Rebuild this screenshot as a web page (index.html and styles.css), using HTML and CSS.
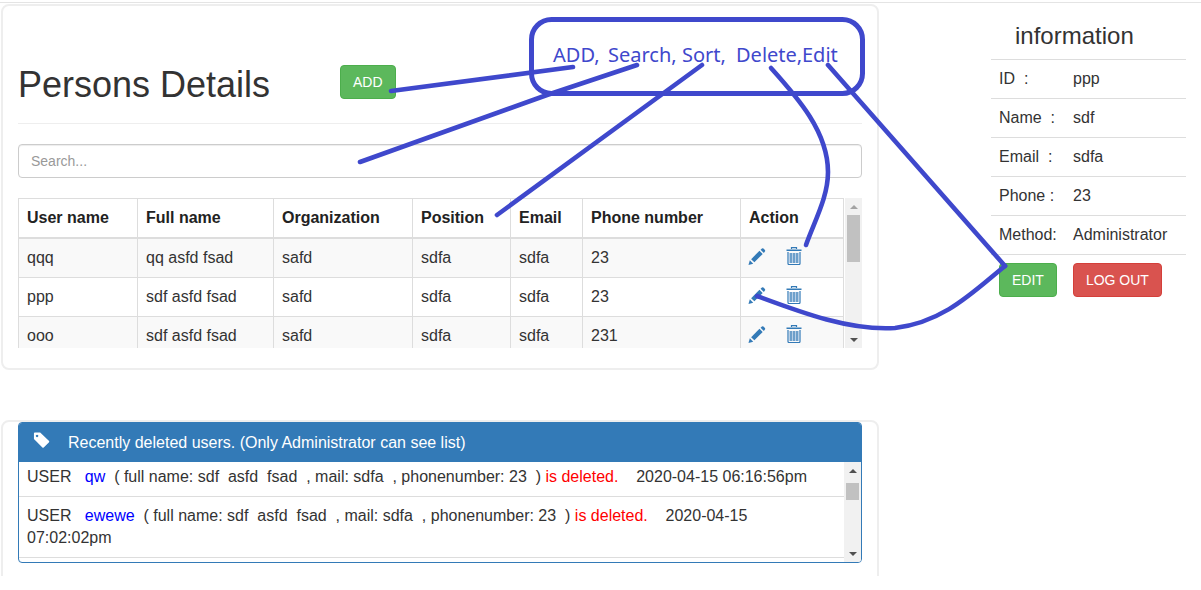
FILE: index.html
```html
<!DOCTYPE html>
<html lang="en">
<head>
  <meta charset="UTF-8" />
  <title>Persons Details</title>
  <link rel="stylesheet" href="styles.css">
</head>
<body>
  <svg class="icon-defs" width="0" height="0">
    <symbol id="pencil" viewBox="0 0 18 18">
      <path d="M0 18 L1.4 13 L5 16.6 Z" fill="#337ab7"/>
      <path d="M2.8 11.8 L11.6 3 L15 6.4 L6.2 15.2 Z" fill="#337ab7"/>
      <path d="M12.8 1.8 L14.2 0.6 Q15 0 15.8 0.6 L17.4 2.2 Q18 3 17.4 3.8 L16.2 5.2 Z" fill="#337ab7"/>
    </symbol>
    <symbol id="trash" viewBox="0 0 16 18">
      <path d="M5.5 2 V0.6 H10.5 V2" fill="none" stroke="#337ab7" stroke-width="1.2"/>
      <path d="M0.5 2.5 H15.5 V4 H0.5 Z" fill="#337ab7"/>
      <path d="M2 5 V16.5 Q2 17.5 3 17.5 H13 Q14 17.5 14 16.5 V5" fill="none" stroke="#337ab7" stroke-width="1.2"/>
      <path d="M5 6 V16 M8 6 V16 M11 6 V16" fill="none" stroke="#337ab7" stroke-width="1.4"/>
      <path d="M3.5 6 V16 M6.5 6 V16 M9.5 6 V16 M12.5 6 V16" fill="none" stroke="#b8cfe6" stroke-width="1"/>
    </symbol>
  </svg>

  <div class="topline"></div>

  <div class="page">
    <div class="left-col">
      <div class="panel">
        <div class="page-header">
          <h1>Persons Details</h1>
          <button class="btn btn-green">ADD</button>
        </div>

        <input class="search" type="text" placeholder="Search..." />

        <div class="table-wrap">
          <div class="table-clip">
            <table class="persons">
              <colgroup>
                <col class="c-user"><col class="c-full"><col class="c-org"><col class="c-pos">
                <col class="c-mail"><col class="c-phone"><col class="c-action">
              </colgroup>
              <thead>
                <tr>
                  <th>User name</th><th>Full name</th><th>Organization</th><th>Position</th>
                  <th>Email</th><th>Phone number</th><th>Action</th>
                </tr>
              </thead>
              <tbody>
                <tr class="odd">
                  <td>qqq</td><td>qq asfd fsad</td><td>safd</td><td>sdfa</td><td>sdfa</td><td>23</td>
                  <td><span class="actions"><svg class="ico-pencil"><use href="#pencil"/></svg><svg class="ico-trash"><use href="#trash"/></svg></span></td>
                </tr>
                <tr>
                  <td>ppp</td><td>sdf asfd fsad</td><td>safd</td><td>sdfa</td><td>sdfa</td><td>23</td>
                  <td><span class="actions"><svg class="ico-pencil"><use href="#pencil"/></svg><svg class="ico-trash"><use href="#trash"/></svg></span></td>
                </tr>
                <tr class="odd">
                  <td>ooo</td><td>sdf asfd fsad</td><td>safd</td><td>sdfa</td><td>sdfa</td><td>231</td>
                  <td><span class="actions"><svg class="ico-pencil"><use href="#pencil"/></svg><svg class="ico-trash"><use href="#trash"/></svg></span></td>
                </tr>
              </tbody>
            </table>
          </div>
          <div class="scrollbar">
            <span class="arrow-up off"></span>
            <span class="track"><span class="thumb thumb-table"></span></span>
            <span class="arrow-down"></span>
          </div>
        </div>
      </div>

      <div class="panel panel-deleted">
        <div class="deleted">
          <div class="deleted-head">
            <svg class="ico-tag" viewBox="0 0 18 18">
              <path d="M0.5 1.5 Q0.5 0.5 1.5 0.5 H7.5 L17.5 10 Q18 10.8 17.5 11.5 L11.5 17.5 Q10.7 18 10 17.5 L0.5 8 Z M4 3 A1.4 1.4 0 1 0 4.01 3 Z" fill="#fff" fill-rule="evenodd"/>
            </svg>
            Recently deleted users. (Only Administrator can see list)
          </div>
          <div class="deleted-body">
            <div class="deleted-clip">
              <ul class="deleted-list">
                <li>USER &nbsp; <span class="who">qw</span> &nbsp;( full name: sdf &nbsp;asfd &nbsp;fsad &nbsp;, mail: sdfa &nbsp;, phonenumber: 23 &nbsp;) <span class="gone">is deleted.</span> &nbsp; &nbsp;2020-04-15 06:16:56pm</li>
                <li>USER &nbsp; <span class="who">ewewe</span> &nbsp;( full name: sdf &nbsp;asfd &nbsp;fsad &nbsp;, mail: sdfa &nbsp;, phonenumber: 23 &nbsp;) <span class="gone">is deleted.</span> &nbsp; &nbsp;2020-04-15<br>07:02:02pm</li>
              </ul>
            </div>
            <div class="scrollbar">
              <span class="arrow-up"></span>
              <span class="track"><span class="thumb thumb-list"></span></span>
              <span class="arrow-down"></span>
            </div>
          </div>
        </div>
      </div>
    </div>

    <div class="right-col">
      <h3>information</h3>
      <table class="info">
        <tr><td class="lbl">ID &nbsp;:</td><td>ppp</td></tr>
        <tr><td class="lbl">Name &nbsp;:</td><td>sdf</td></tr>
        <tr><td class="lbl">Email &nbsp;:</td><td>sdfa</td></tr>
        <tr><td class="lbl">Phone :</td><td>23</td></tr>
        <tr><td class="lbl">Method:</td><td>Administrator</td></tr>
      </table>
      <div class="info-buttons">
        <button class="btn btn-green">EDIT</button>
        <button class="btn btn-red">LOG OUT</button>
      </div>
    </div>
  </div>

  <!-- hand drawn notes on top of the screenshot -->
  <svg class="notes" width="1201" height="590" viewBox="0 0 1201 590">
    <rect x="531.5" y="19.5" width="331" height="74" rx="20" ry="20" fill="none" stroke="#3f48cc" stroke-width="5"/>
    <text y="62" class="notes-text"><tspan x="553">ADD,</tspan><tspan x="608">Search,</tspan><tspan x="682">Sort,</tspan><tspan x="736">Delete,</tspan><tspan x="802">Edit</tspan></text>
    <g fill="none" stroke="#3f48cc" stroke-width="4.6" stroke-linecap="round" stroke-linejoin="round">
      <path d="M573 67 L391 91"/>
      <path d="M637 65 L547 95 L360 162"/>
      <path d="M702 65 L497 215"/>
      <path d="M771 68 C798 98 828 132 828 172 C828 197 815 220 806 245"/>
      <path d="M828 65 L1005 266"/>
      <path d="M1005 266 C975 290 945 322 895 328 C850 331 800 312 757 296"/>
    </g>
  </svg>
</body>
</html>
```

FILE: styles.css
```css
* {
  box-sizing: border-box;
}
html, body {
  margin: 0;
  padding: 0;
  background: #fff;
}
body {
  position: relative;
  width: 1201px;
  height: 590px;
  overflow: hidden;
  font-family: "Liberation Sans", Arial, sans-serif;
  font-size: 16px;
  line-height: 22px;
  color: #333;
}
.icon-defs {
  position: absolute;
}
.topline {
  height: 4px;
  background: #fff;
  box-shadow: inset 0 -1px 0 #fff, inset 0 -2px 0 #e4e4e4;
}

.page {
  display: flex;
  height: 572px;
  overflow: hidden;
}
.left-col {
  width: 879px;
  padding-left: 1px;
  flex: none;
}
.right-col {
  width: 195px;
  margin-left: 112px;
  flex: none;
}

.panel {
  width: 878px;
  height: 366px;
  padding: 0 15px;
  border: 2px solid #eee;
  border-radius: 8px;
}
.panel-deleted {
  height: 200px;
  margin-top: 50px;
}

.page-header {
  display: flex;
  align-items: flex-start;
  height: 118px;
  border-bottom: 1px solid #eee;
}
.page-header h1 {
  width: 322px;
  margin: 0;
  padding-top: 57px;
  font-size: 36px;
  font-weight: 400;
  line-height: 44px;
}
.page-header .btn {
  margin-top: 59px;
}

.btn {
  height: 34px;
  padding: 6px 12px;
  font-family: inherit;
  font-size: 14px;
  line-height: 20px;
  color: #fff;
  border: 1px solid transparent;
  border-radius: 4px;
}
.btn-green {
  background: #5cb85c;
  border-color: #4cae4c;
}
.btn-red {
  background: #d9534f;
  border-color: #d43f3a;
}

.search {
  display: block;
  width: 844px;
  height: 34px;
  margin-top: 20px;
  padding: 6px 12px;
  font-family: inherit;
  font-size: 14px;
  color: #555;
  background: #fff;
  border: 1px solid #ccc;
  border-radius: 4px;
  box-shadow: inset 0 1px 1px rgba(0, 0, 0, .075);
}
.search::placeholder {
  color: #999;
}

.table-wrap {
  display: flex;
  width: 844px;
  height: 150px;
  margin-top: 20px;
}
.table-clip {
  flex: 1;
  overflow: hidden;
}
.persons {
  width: 826px;
  table-layout: fixed;
  border-collapse: collapse;
}
.persons th,
.persons td {
  height: 39px;
  padding: 8px 8px 7px;
  text-align: left;
  border: 1px solid #ddd;
  white-space: nowrap;
}
.persons th {
  padding: 8px;
  font-weight: 700;
  color: #222;
  border-bottom-width: 2px;
}
.odd {
  background: #f9f9f9;
}
.c-user { width: 119px; }
.c-full { width: 136px; }
.c-org { width: 139px; }
.c-pos { width: 98px; }
.c-mail { width: 72px; }
.c-phone { width: 158px; }
.c-action { width: 103px; }

.actions {
  display: flex;
  align-items: center;
  height: 18px;
  margin-top: -4px;
}
.ico-pencil {
  width: 18px;
  height: 17px;
  margin-left: -1px;
}
.ico-trash {
  width: 16px;
  height: 18px;
  margin-left: 20px;
}

.scrollbar {
  display: flex;
  flex-direction: column;
  width: 17px;
  flex: none;
  background: #f1f1f1;
}
.track {
  flex: 1;
  padding: 0 2px;
}
.thumb {
  display: block;
  background: #c1c1c1;
}
.thumb-table {
  height: 47px;
}
.thumb-list {
  height: 17px;
  margin-top: 4px;
}
.arrow-up,
.arrow-down {
  display: flex;
  align-items: center;
  justify-content: center;
  height: 17px;
  flex: none;
}
.arrow-up::before,
.arrow-down::before {
  content: "";
  border-left: 4px solid transparent;
  border-right: 4px solid transparent;
}
.arrow-up::before {
  border-bottom: 4px solid #505050;
}
.arrow-down::before {
  border-top: 4px solid #505050;
}
.arrow-up.off::before {
  border-bottom-color: #a3a3a3;
}

.deleted {
  width: 844px;
  height: 141px;
  border: 1px solid #337ab7;
  border-radius: 4px;
  overflow: hidden;
}
.deleted-head {
  display: flex;
  align-items: center;
  height: 39px;
  padding-left: 14px;
  color: #fff;
  background: #337ab7;
}
.ico-tag {
  width: 17px;
  height: 16px;
  margin-right: 18px;
  margin-top: -6px;
}
.deleted-body {
  display: flex;
  height: 100px;
}
.deleted-clip {
  flex: 1;
  overflow: hidden;
}
.deleted-list {
  margin: -4px 0 0;
  padding: 0;
  list-style: none;
}
.deleted-list li {
  padding: 8px;
  border-bottom: 1px solid #ddd;
}
.who {
  color: #00f;
}
.gone {
  color: #f00;
}

.right-col h3 {
  height: 55px;
  margin: 0;
  padding: 18px 0 0 24px;
  font-size: 24px;
  font-weight: 400;
  line-height: 28px;
}
.info {
  width: 195px;
  border-collapse: collapse;
}
.info td {
  height: 39px;
  padding: 8px;
  border-top: 1px solid #ddd;
  border-bottom: 1px solid #ddd;
  white-space: nowrap;
}
.info .lbl {
  width: 74px;
}
.info-buttons {
  display: flex;
  gap: 16px;
  margin-top: 8px;
  padding-left: 8px;
}

.notes {
  position: absolute;
  top: 0;
  left: 0;
  pointer-events: none;
}
.notes-text {
  font-family: "Noto Sans", sans-serif;
  font-size: 20px;
  fill: #3f48cc;
}
```
